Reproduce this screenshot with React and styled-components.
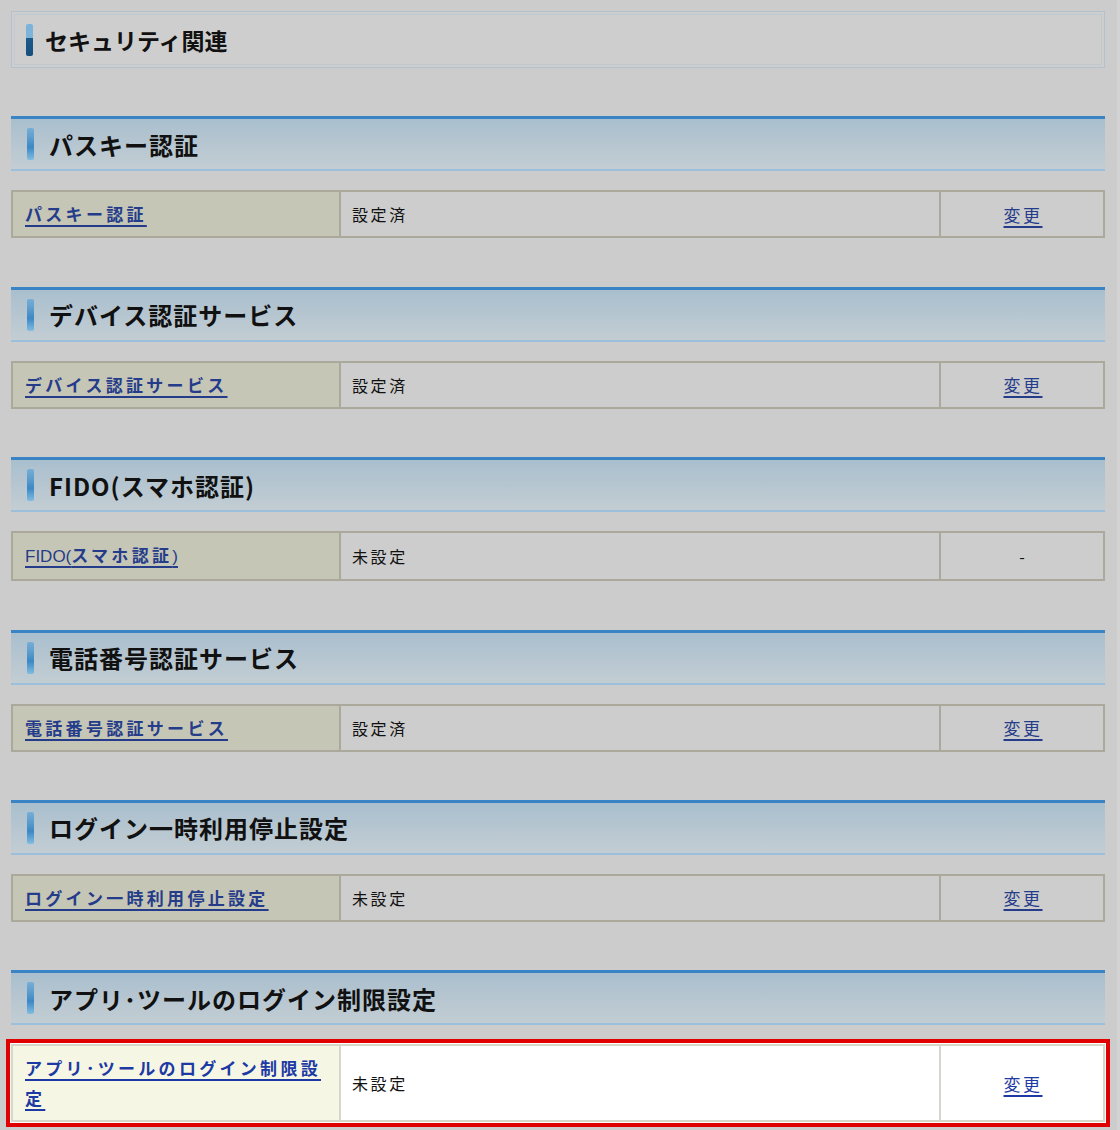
import styled, { createGlobalStyle } from "styled-components";

const GlobalStyle = createGlobalStyle`
  html, body {
    margin: 0;
    padding: 0;
    background: #cccccc;
  }
  body {
    font-family: "Noto Sans CJK JP", "Noto Sans", sans-serif;
    color: #111;
  }
`;

const Page = styled.div`
  width: 1120px;
  min-height: 1130px;
  box-sizing: border-box;
  padding: 11px 12px 0 11px;
  background: #cccccc;
  border-right: 3px solid #d3d3d3;
`;

const TopBox = styled.div`
  border: 1px solid #b3c0cd;
  padding: 2px;
  background: #cecece;
`;

const TopInner = styled.div`
  height: 49px;
  border: 1px solid #bfc7cf;
  display: flex;
  align-items: center;
  padding-left: 11px;
  gap: 12px;
`;

const Marker = styled.span`
  display: block;
  width: 7px;
  height: 32px;
  border-radius: 2px;
  background: ${(p) =>
    p.$dark
      ? "linear-gradient(#7db3da 0%, #7db3da 45%, #1c5a8c 45%, #154e7d 100%)"
      : "linear-gradient(#76aed6 0%, #5d9dcd 30%, #3b88c6 60%, #82bce0 100%)"};
`;

const PageTitle = styled.h1`
  margin: 0;
  font-size: 23px;
  font-weight: 700;
  color: #111;
`;

const Section = styled.section`
  margin-top: 48.4px;
`;

const SectionHeader = styled.div`
  height: 50px;
  border-top: 3px solid #3a84c6;
  border-bottom: 2px solid #9cc0db;
  background: linear-gradient(#a9bfce, #c3cdd3);
  display: flex;
  align-items: center;
  padding-left: 16px;
  gap: 15px;
  box-sizing: content-box;
`;

const SectionTitle = styled.h2`
  margin: 0;
  font-size: 24px;
  font-weight: 700;
  color: #111;
  letter-spacing: 1px;
`;

const Row = styled.div`
  margin-top: 19px;
  display: grid;
  grid-template-columns: 328px 1fr 162px;
  min-height: 48px;
  box-sizing: border-box;
  border: 2px solid ${(p) => (p.$active ? "#d8d6c8" : "#aaa99b")};
  background: ${(p) => (p.$active ? "#ffffff" : "#cdcdcd")};
  outline: ${(p) => (p.$active ? "4px solid #e00000" : "none")};
  outline-offset: ${(p) => (p.$active ? "1px" : "0")};
  box-shadow: ${(p) => (p.$active ? "0 0 0 1px #ffffff" : "none")};
`;

const LabelCell = styled.div`
  background: ${(p) => (p.$active ? "#f6f6e4" : "#c6c6b6")};
  border-right: 2px solid ${(p) => (p.$active ? "#d8d6c8" : "#aaa99b")};
  display: flex;
  align-items: center;
  padding: 7px 10px 7px 12px;
`;

const LabelLink = styled.a`
  font-size: 17px;
  font-weight: 700;
  letter-spacing: 3.3px;
  line-height: 30px;
  color: ${(p) => (p.$active ? "#1d3aa4" : "#253c8a")};
  text-decoration: underline;
  text-underline-offset: 4px;
  text-decoration-thickness: 2px;
  cursor: pointer;
`;

const Latin = styled.span`
  font-family: "Liberation Sans", "Noto Sans", sans-serif;
  font-weight: 400;
  letter-spacing: 0;
`;

const ValueCell = styled.div`
  display: flex;
  align-items: center;
  padding-left: 11px;
  font-size: 16px;
  letter-spacing: 2.6px;
  color: #111;
  border-right: 2px solid ${(p) => (p.$active ? "#d8d6c8" : "#aaa99b")};
`;

const ActionCell = styled.div`
  display: flex;
  align-items: center;
  justify-content: center;
  font-size: 16px;
  color: #111;
`;

const ActionLink = styled.a`
  font-size: 17px;
  letter-spacing: 2.5px;
  padding-left: 2px;
  color: ${(p) => (p.$active ? "#1d3aa4" : "#253c8a")};
  text-decoration: underline;
  text-underline-offset: 4px;
  text-decoration-thickness: 2px;
  cursor: pointer;
`;

const sections = [
  { title: "パスキー認証", label: "パスキー認証", value: "設定済", action: "変更" },
  { title: "デバイス認証サービス", label: "デバイス認証サービス", value: "設定済", action: "変更" },
  {
    title: "FIDO(スマホ認証)",
    label: (
      <>
        <Latin>FIDO(</Latin>スマホ認証<Latin>)</Latin>
      </>
    ),
    value: "未設定",
    action: null,
  },
  { title: "電話番号認証サービス", label: "電話番号認証サービス", value: "設定済", action: "変更" },
  { title: "ログイン一時利用停止設定", label: "ログイン一時利用停止設定", value: "未設定", action: "変更" },
  {
    title: "アプリ･ツールのログイン制限設定",
    label: "アプリ･ツールのログイン制限設定",
    value: "未設定",
    action: "変更",
    active: true,
  },
];

export default function App() {
  return (
    <>
      <GlobalStyle />
      <Page>
        <TopBox>
          <TopInner>
            <Marker $dark />
            <PageTitle>セキュリティ関連</PageTitle>
          </TopInner>
        </TopBox>
        {sections.map((s) => (
          <Section key={s.title}>
            <SectionHeader>
              <Marker />
              <SectionTitle>{s.title}</SectionTitle>
            </SectionHeader>
            <Row $active={s.active}>
              <LabelCell $active={s.active}>
                <LabelLink $active={s.active}>{s.label}</LabelLink>
              </LabelCell>
              <ValueCell $active={s.active}>{s.value}</ValueCell>
              <ActionCell>
                {s.action ? <ActionLink $active={s.active}>{s.action}</ActionLink> : "-"}
              </ActionCell>
            </Row>
          </Section>
        ))}
      </Page>
    </>
  );
}
